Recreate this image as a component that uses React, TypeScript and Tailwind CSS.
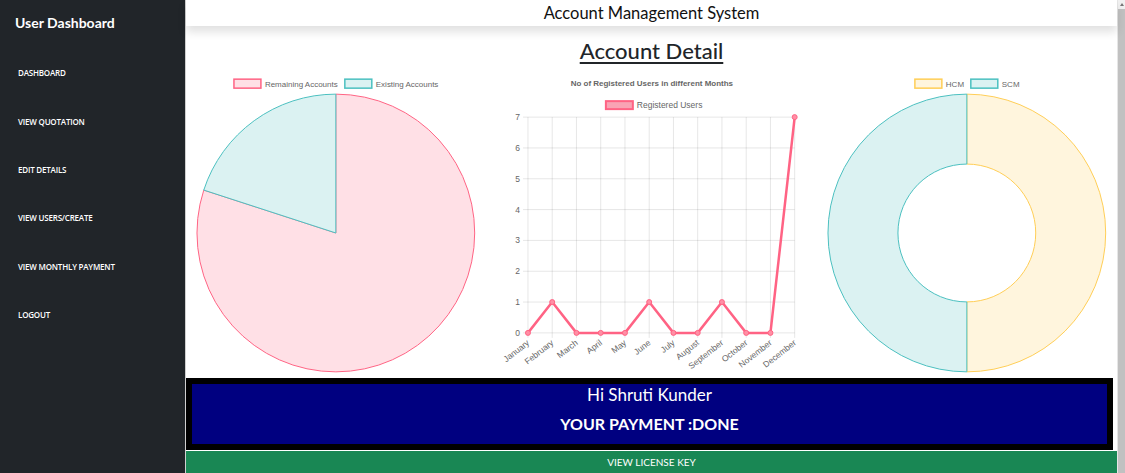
import React from 'react';

const navItems = ['DASHBOARD', 'VIEW QUOTATION', 'EDIT DETAILS', 'VIEW USERS/CREATE', 'VIEW MONTHLY PAYMENT', 'LOGOUT'];

const months = ['January', 'February', 'March', 'April', 'May', 'June', 'July', 'August', 'September', 'October', 'November', 'December'];
const users = [0, 1, 0, 0, 0, 1, 0, 0, 1, 0, 0, 7];

const PINK = '#FF6384';
const PINK_FILL = '#FFE0E6';
const TEAL = '#4BC0C0';
const TEAL_FILL = '#DBF2F2';
const YELLOW = '#FFCE56';
const YELLOW_FILL = '#FFF5DD';

const LegendItem = ({ x, y, stroke, fill, label }: { x: number; y: number; stroke: string; fill: string; label: string }) => (
  <g>
    <rect x={x} y={y} width={27} height={9} fill={fill} stroke={stroke} strokeWidth={1.5} />
    <text x={x + 31} y={y + 7.5} fontSize={8} fill="#666">{label}</text>
  </g>
);

const PieChart = () => (
  <svg viewBox="185 74 310 302" width={310} height={302} style={{ fontFamily: '"Liberation Sans", Arial, sans-serif' }}>
    <LegendItem x={233} y={79} stroke={PINK} fill={PINK_FILL} label="Remaining Accounts" />
    <LegendItem x={344} y={79} stroke={TEAL} fill={TEAL_FILL} label="Existing Accounts" />
    <path d="M335,233 L335,94 A139,139 0 1 1 202.8,190.05 Z" fill={PINK_FILL} stroke={PINK} strokeWidth={1} />
    <path d="M335,233 L202.8,190.05 A139,139 0 0 1 335,94 Z" fill={TEAL_FILL} stroke={TEAL} strokeWidth={1} />
  </svg>
);

const LineChart = () => {
  const x0 = 527;
  const step = (794 - 527) / 11;
  const y0 = 333;
  const unit = (333 - 117) / 7;
  const pts = users.map((v, i) => [x0 + i * step, y0 - v * unit]);
  return (
    <svg viewBox="495 74 311 302" width={311} height={302} style={{ fontFamily: '"Liberation Sans", Arial, sans-serif' }}>
      <text x={651} y={86} fontSize={8} fontWeight="bold" fill="#666" textAnchor="middle">No of Registered Users in different Months</text>
      <rect x={605} y={101} width={27} height={8} fill="#F9A3B4" stroke={PINK} strokeWidth={2} />
      <text x={636} y={108} fontSize={8.5} fill="#666">Registered Users</text>
      {Array.from({ length: 8 }).map((_, i) => (
        <g key={i}>
          <line x1={522} x2={794} y1={y0 - i * unit} y2={y0 - i * unit} stroke="rgba(0,0,0,0.1)" strokeWidth={1} />
          <text x={519} y={y0 - i * unit + 3} fontSize={8.5} fill="#666" textAnchor="end">{i}</text>
        </g>
      ))}
      {months.map((m, i) => (
        <g key={m}>
          <line x1={x0 + i * step} x2={x0 + i * step} y1={117} y2={338} stroke="rgba(0,0,0,0.1)" strokeWidth={1} />
          <text
            x={x0 + i * step + 2}
            y={344}
            fontSize={8.5}
            fill="#666"
            textAnchor="end"
            transform={`rotate(-38 ${x0 + i * step + 2} 344)`}
          >
            {m}
          </text>
        </g>
      ))}
      <polyline points={pts.map(p => p.join(',')).join(' ')} fill="none" stroke={PINK} strokeWidth={2.5} strokeLinejoin="round" />
      {pts.map((p, i) => (
        <circle key={i} cx={p[0]} cy={p[1]} r={2.5} fill="#FF8FA5" stroke={PINK} strokeWidth={1} />
      ))}
    </svg>
  );
};

const DoughnutChart = () => (
  <svg viewBox="806 74 311 302" width={311} height={302} style={{ fontFamily: '"Liberation Sans", Arial, sans-serif' }}>
    <LegendItem x={915} y={79} stroke={YELLOW} fill={YELLOW_FILL} label="HCM" />
    <LegendItem x={971} y={79} stroke={TEAL} fill={TEAL_FILL} label="SCM" />
    <path d="M967,94 A139,139 0 0 1 967,372 L967,302 A69,69 0 0 0 967,164 Z" fill={YELLOW_FILL} stroke={YELLOW} strokeWidth={1} />
    <path d="M967,372 A139,139 0 0 1 967,94 L967,164 A69,69 0 0 0 967,302 Z" fill={TEAL_FILL} stroke={TEAL} strokeWidth={1} />
  </svg>
);

const App: React.FC = () => {
  return (
    <div className="flex h-screen w-full overflow-hidden bg-white" style={{ fontFamily: 'Lato, "Open Sans", sans-serif' }}>
      {/* Sidebar */}
      <aside className="w-[185px] shrink-0 bg-[#212529] text-white">
        <div className="h-[44px] flex items-center px-[15px] text-[14px] font-bold">
          User Dashboard
        </div>
        <ul className="mt-[5px]" style={{ fontFamily: '"Open Sans", sans-serif' }}>
          {navItems.map(item => (
            <li key={item} className="h-[48.4px] flex items-center px-[18px] text-[8px] font-semibold tracking-[-0.2px]">
              {item}
            </li>
          ))}
        </ul>
      </aside>

      {/* Main */}
      <main className="flex-1 flex flex-col border-l border-[#cfcfcf] min-w-0">
        <header className="h-[26px] shrink-0 flex items-center justify-center bg-white text-[16.5px] text-[#111] shadow-[0_6px_10px_rgba(0,0,0,0.12)] relative z-10">
          Account Management System
        </header>

        <div className="h-[48px] flex items-center justify-center">
          <h1 className="text-[22px] font-medium text-[#212529] underline underline-offset-[3px] decoration-[1.5px]">Account Detail</h1>
        </div>

        <div className="h-[302px] flex">
          <PieChart />
          <LineChart />
          <DoughnutChart />
        </div>

        <div className="mt-[2px] mr-[4px] bg-black p-[6px]">
          <div className="h-[60px] bg-[#000080] text-white flex flex-col items-center">
            <div className="leading-[22px] text-[17px]">Hi Shruti Kunder</div>
            <div className="mt-[7px] leading-[22px] text-[16px] font-bold">YOUR PAYMENT :DONE</div>
          </div>
        </div>

        <div className="mt-[1px] h-[22px] bg-[#198754] text-white text-[10px] flex items-center justify-center">
          VIEW LICENSE KEY
        </div>
      </main>

      {/* Scrollbar */}
      <div className="w-[8px] shrink-0 flex flex-col border-l border-[#e6e6e6]">
        <div className="h-[9px] bg-[#f1f1f1] flex items-center justify-center">
          <div className="w-0 h-0 border-l-[2.5px] border-r-[2.5px] border-b-[3px] border-l-transparent border-r-transparent border-b-[#777]" />
        </div>
        <div className="flex-1 bg-[#c1c1c1]" />
      </div>
    </div>
  );
};

export default App;
